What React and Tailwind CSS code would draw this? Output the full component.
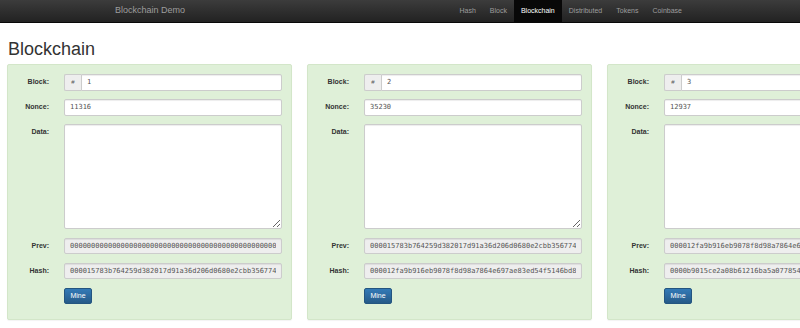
const blocks = [
    {
        number: "1",
        nonce: "11316",
        prev: "0000000000000000000000000000000000000000000000000000000000000000",
        hash: "000015783b764259d382017d91a36d206d0680e2cbb3567748f46a33fe9297cf"
    },
    {
        number: "2",
        nonce: "35230",
        prev: "000015783b764259d382017d91a36d206d0680e2cbb3567748f46a33fe9297cf",
        hash: "000012fa9b916eb9078f8d98a7864e697ae83ed54f5146bd84452cdafd043c19"
    },
    {
        number: "3",
        nonce: "12937",
        prev: "000012fa9b916eb9078f8d98a7864e697ae83ed54f5146bd84452cdafd043c19",
        hash: "0000b9015ce2a08b61216ba5a0778545bf4ddd7ceb7bbd85dd8062b29a9140bf"
    }
];

const navItems = ["Hash", "Block", "Blockchain", "Distributed", "Tokens", "Coinbase"];

const inputBase =
    "h-[16.5px] w-full min-w-0 border border-[#ccc] px-[5px] font-['DejaVu_Sans_Mono',monospace] text-[7px] text-[#555] outline-none shadow-[inset_0_1px_1px_rgba(0,0,0,0.075)]";

const Label = ({ children }) => (
    <label className="block text-right text-[7px] font-bold leading-[16.5px] text-[#333]">{children}</label>
);

const BlockCard = ({ number, nonce, prev, hash }) => {
    return (
        <div className="h-[256px] w-[285px] flex-none rounded-[2px] border border-[#d3e6c9] bg-[#dff0d8] px-[9px] pt-[9px] shadow-[0_1px_1px_rgba(0,0,0,0.05)]">
            <div className="grid grid-cols-[32px_1fr] gap-x-[15px] gap-y-[8.5px]">
                <Label>Block:</Label>
                <div className="flex h-[16.5px]">
                    <span className="flex w-[17px] flex-none items-center justify-center rounded-l-[2px] border border-r-0 border-[#ccc] bg-[#eee] text-[6px] text-[#555]">
                        #
                    </span>
                    <input readOnly value={number} className={`${inputBase} rounded-r-[2px] bg-white`} />
                </div>

                <Label>Nonce:</Label>
                <input readOnly value={nonce} className={`${inputBase} rounded-[2px] bg-white`} />

                <Label>Data:</Label>
                <textarea
                    defaultValue=""
                    className="block h-[105px] w-full rounded-[2px] border border-[#ccc] bg-white px-[5px] py-[3px] font-['DejaVu_Sans_Mono',monospace] text-[7px] text-[#555] outline-none shadow-[inset_0_1px_1px_rgba(0,0,0,0.075)]"
                />

                <Label>Prev:</Label>
                <input readOnly value={prev} className={`${inputBase} rounded-[2px] bg-[#eee]`} />

                <Label>Hash:</Label>
                <input readOnly value={hash} className={`${inputBase} rounded-[2px] bg-[#eee]`} />

                <div />
                <div className="flex">
                    <button className="block h-[16px] w-[28px] rounded-[2px] border border-[#245580] bg-gradient-to-b from-[#337ab7] to-[#265a88] text-[7px] leading-none text-white">
                        Mine
                    </button>
                </div>
            </div>
        </div>
    );
};

const App = () => {
    return (
        <div className="h-[328px] w-[800px] overflow-hidden bg-white font-['Liberation_Sans',Arial,sans-serif] text-[#333]">
            <div className="box-border flex h-[23px] items-stretch border-b border-[#080808] bg-gradient-to-b from-[#3c3c3c] to-[#222]">
                <span className="ml-[115px] flex items-center text-[9px] text-[#9d9d9d]">Blockchain Demo</span>
                <nav className="ml-auto mr-[111px] flex items-stretch">
                    {navItems.map((item) => (
                        <span
                            key={item}
                            className={
                                item === "Blockchain"
                                    ? "flex items-center bg-[#080808] px-[7px] text-[7px] text-white"
                                    : "flex items-center px-[7px] text-[7px] text-[#9d9d9d]"
                            }
                        >
                            {item}
                        </span>
                    ))}
                </nav>
            </div>

            <h1 className="ml-[8px] mt-[16px] text-[18px] font-medium leading-[20px]">Blockchain</h1>

            <div className="mt-[5px] flex gap-[15px] pl-[7px]">
                {blocks.map((block) => (
                    <BlockCard key={block.number} {...block} />
                ))}
            </div>
        </div>
    );
};

export default App;
